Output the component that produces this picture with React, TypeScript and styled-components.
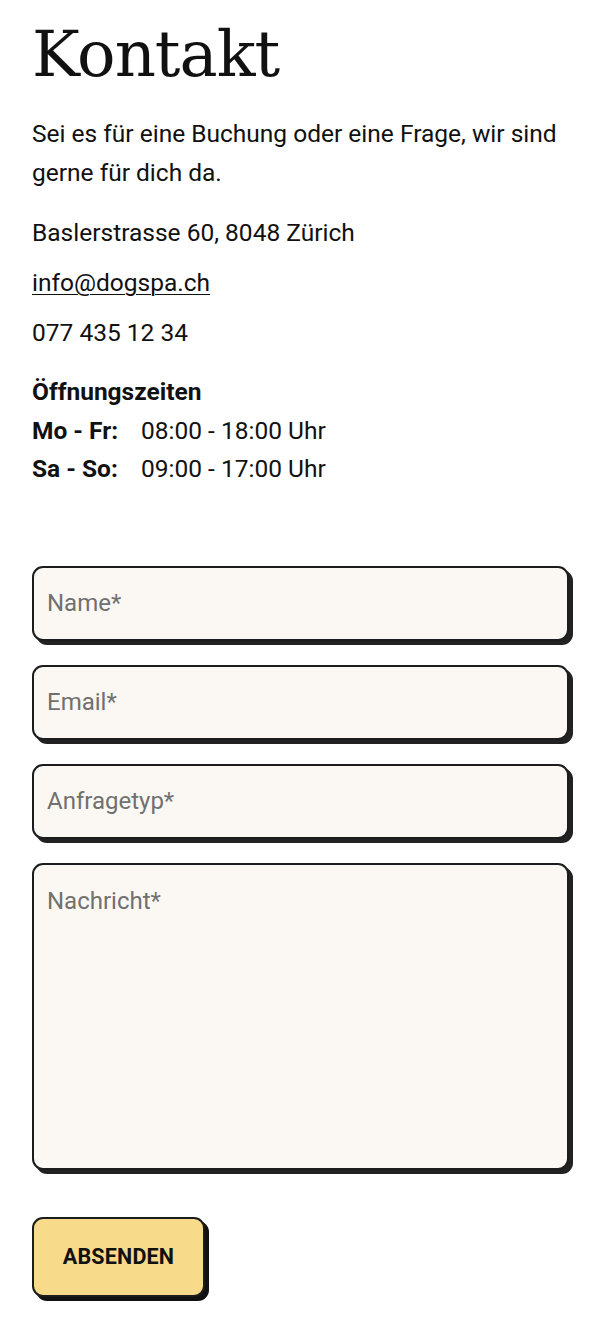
import React from 'react'
import styled, { createGlobalStyle } from 'styled-components'

const GlobalStyle = createGlobalStyle`
    * {
        box-sizing: border-box;
    }
    body {
        margin: 0;
        background: #fff;
        font-family: 'Roboto', 'Liberation Sans', sans-serif;
        color: #111;
    }
`

const Page = styled.main`
    padding: 14px 31px 40px 32px;
`

const Title = styled.h1`
    font-family: 'Roboto Slab', 'DejaVu Serif', serif;
    font-weight: 400;
    font-size: 64px;
    line-height: 80px;
    margin: 0 0 20px;
    letter-spacing: -1px;
`

const Intro = styled.p`
    font-size: 24.5px;
    line-height: 39px;
    margin: 0 0 22px;
`

const Info = styled.p`
    font-size: 24.5px;
    line-height: 38px;
    margin: 0 0 12px;

    a {
        color: inherit;
        text-decoration: underline;
        text-underline-offset: 3px;
        text-decoration-thickness: 1px;
    }
`

const Hours = styled.div`
    margin-top: 21px;
    font-size: 24.5px;
    line-height: 38.5px;
`

const HoursTitle = styled.div`
    font-weight: 700;
`

const HoursRow = styled.div`
    display: grid;
    grid-template-columns: 109px auto;

    b {
        font-weight: 700;
    }
`

const Form = styled.form`
    margin-top: 77px;
    display: flex;
    flex-direction: column;
    gap: 24px;
    align-items: flex-start;
`

const fieldStyle = `
    width: 100%;
    display: block;
    background: #fbf8f3;
    border: 2px solid #1c1c1c;
    border-radius: 11px;
    box-shadow: 4px 4px 0 #222;
    font-family: 'Roboto', 'Liberation Sans', sans-serif;
    font-size: 24px;
    color: #111;
    padding: 0 13px;
    outline: none;

    &::placeholder {
        color: #707070;
    }
`

const Input = styled.input`
    ${fieldStyle}
    height: 75px;
`

const TextArea = styled.textarea`
    ${fieldStyle}
    height: 307px;
    resize: none;
    padding-top: 20px;
    line-height: 32px;
`

const SubmitButton = styled.button`
    margin-top: 23px;
    width: 173px;
    height: 80px;
    background: #f8da8b;
    border: 2px solid #1c1c1c;
    border-radius: 11px;
    box-shadow: 4px 4px 0 #111;
    font-family: 'Roboto', 'Liberation Sans', sans-serif;
    font-weight: 700;
    font-size: 21.5px;
    letter-spacing: 0.2px;
    color: #111;
    cursor: pointer;
`

const App: React.FC = () => {
    return (
        <>
            <GlobalStyle />
            <Page>
                <Title>Kontakt</Title>
                <Intro>Sei es für eine Buchung oder eine Frage, wir sind gerne für dich da.</Intro>
                <Info>Baslerstrasse 60, 8048 Zürich</Info>
                <Info><a href="#">info@dogspa.ch</a></Info>
                <Info>077 435 12 34</Info>
                <Hours>
                    <HoursTitle>Öffnungszeiten</HoursTitle>
                    <HoursRow><b>Mo - Fr:</b><span>08:00 - 18:00 Uhr</span></HoursRow>
                    <HoursRow><b>Sa - So:</b><span>09:00 - 17:00 Uhr</span></HoursRow>
                </Hours>
                <Form onSubmit={e => e.preventDefault()}>
                    <Input type="text" placeholder="Name*" />
                    <Input type="email" placeholder="Email*" />
                    <Input type="text" placeholder="Anfragetyp*" />
                    <TextArea placeholder="Nachricht*" />
                    <SubmitButton type="submit">ABSENDEN</SubmitButton>
                </Form>
            </Page>
        </>
    )
}

export default App
